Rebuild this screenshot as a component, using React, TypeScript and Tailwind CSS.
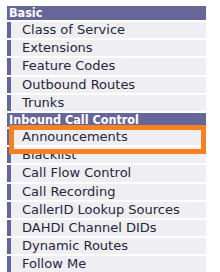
import React from 'react';

type Section = { title: string; items: string[] };

const sections: Section[] = [
  {
    title: 'Basic',
    items: ['Class of Service', 'Extensions', 'Feature Codes', 'Outbound Routes', 'Trunks'],
  },
  {
    title: 'Inbound Call Control',
    items: [
      'Announcements',
      'Blacklist',
      'Call Flow Control',
      'Call Recording',
      'CallerID Lookup Sources',
      'DAHDI Channel DIDs',
      'Dynamic Routes',
      'Follow Me',
    ],
  },
];

const MenuItem: React.FC<{ label: string }> = ({ label }) => (
  <div className="h-[16.2px] mb-[2px] flex items-center bg-[#eeeef3] border-l-4 border-[#666699] pl-[11px] text-[13px] leading-[16px] text-[#26263a] whitespace-nowrap overflow-hidden">
    {label}
  </div>
);

export default function App() {
  return (
    <div
      className="relative w-[220px] h-[272px] overflow-hidden bg-white pt-[6px] pl-[7px] pr-[14px]"
      style={{ fontFamily: '"DejaVu Sans", Verdana, sans-serif' }}
    >
      {sections.map((section) => (
        <div key={section.title}>
          <div className="h-[14px] mb-[2px] bg-[#666699] pl-[2px] text-white font-bold text-[12.5px] leading-[14px] whitespace-nowrap overflow-hidden font-['DejaVu_Sans_Condensed',sans-serif]">
            {section.title}
          </div>
          {section.items.map((item) => (
            <MenuItem key={item} label={item} />
          ))}
        </div>
      ))}
      <div className="absolute left-[9px] top-[125px] w-[197px] h-[29px] border-[5px] border-[#f68121]" />
    </div>
  );
}
